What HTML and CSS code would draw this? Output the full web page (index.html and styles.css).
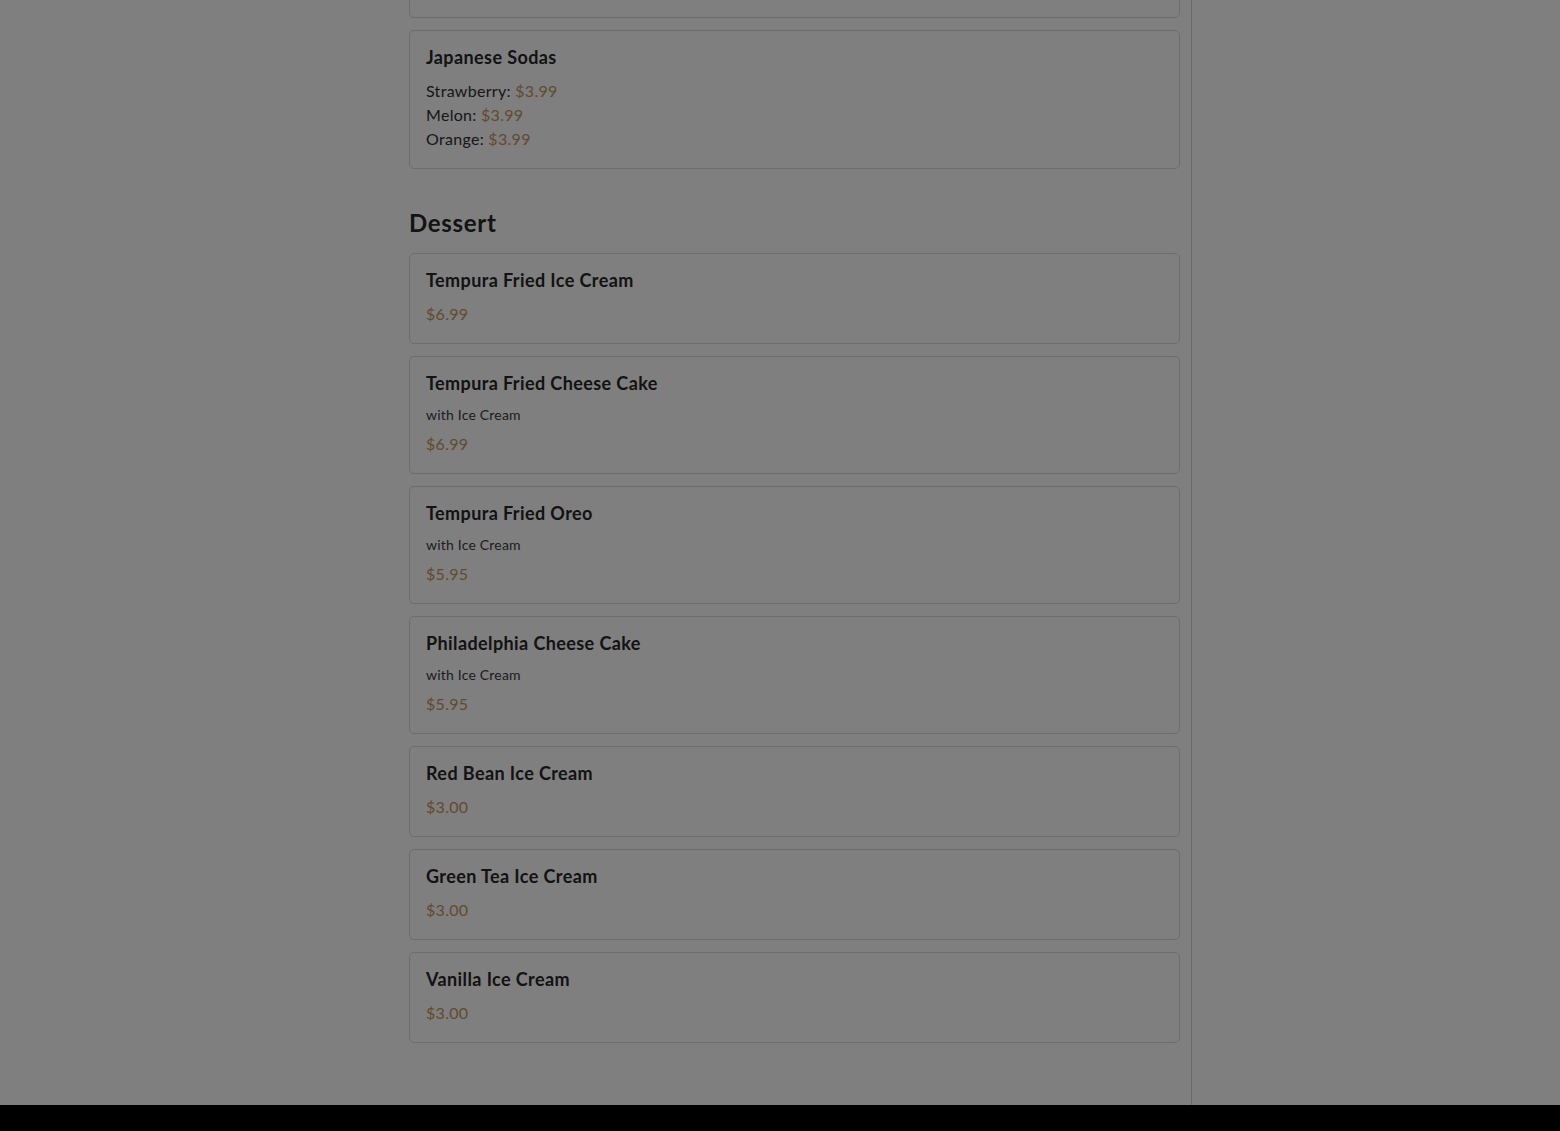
FILE: index.html
```html
<!DOCTYPE html>
<html lang="en">
<head>
<meta charset="utf-8">
<title>Menu</title>
<link rel="stylesheet" href="styles.css">
</head>
<body>
<div class="viewport">
  <main class="main">
    <div class="card card-first">
      <h3 class="item-title">Bubble Tea</h3>
      <div class="line">Taro: <span class="price">$4.99</span></div>
      <div class="line">Mango: <span class="price">$4.99</span></div>
      <div class="line">Brown Sugar: <span class="price">$4.99</span></div>
    </div>
    <div class="card">
      <h3 class="item-title">Japanese Sodas</h3>
      <div class="line">Strawberry: <span class="price">$3.99</span></div>
      <div class="line">Melon: <span class="price">$3.99</span></div>
      <div class="line">Orange: <span class="price">$3.99</span></div>
    </div>

    <section class="section">
      <h2 class="section-title">Dessert</h2>
      <div class="card">
        <h3 class="item-title">Tempura Fried Ice Cream</h3>
        <div class="price line">$6.99</div>
      </div>
      <div class="card">
        <h3 class="item-title">Tempura Fried Cheese Cake</h3>
        <p class="desc">with Ice Cream</p>
        <div class="price line">$6.99</div>
      </div>
      <div class="card">
        <h3 class="item-title">Tempura Fried Oreo</h3>
        <p class="desc">with Ice Cream</p>
        <div class="price line">$5.95</div>
      </div>
      <div class="card">
        <h3 class="item-title">Philadelphia Cheese Cake</h3>
        <p class="desc">with Ice Cream</p>
        <div class="price line">$5.95</div>
      </div>
      <div class="card">
        <h3 class="item-title">Red Bean Ice Cream</h3>
        <div class="price line">$3.00</div>
      </div>
      <div class="card">
        <h3 class="item-title">Green Tea Ice Cream</h3>
        <div class="price line">$3.00</div>
      </div>
      <div class="card">
        <h3 class="item-title">Vanilla Ice Cream</h3>
        <div class="price line">$3.00</div>
      </div>
    </section>
  </main>
  <footer class="footer"></footer>
</div>
<div class="overlay"></div>
</body>
</html>
```

FILE: styles.css
```css
* { box-sizing: border-box; }
html, body { margin: 0; padding: 0; }
body {
  background: #ffffff;
  font-family: "Lato", "Noto Sans", "Liberation Sans", sans-serif;
  color: #2a2a2a;
}
.viewport {
  height: 1131px;
  overflow: hidden;
}
.main {
  margin-left: 409px;
  width: 783px;
  padding-right: 11px;
  padding-bottom: 50px;
  border-right: 1px solid #d2d2d2;
  margin-top: -121px;
}
.card {
  border: 1px solid #d8d8d8;
  border-radius: 5px;
  padding: 16px 16px 17px;
  margin-bottom: 12px;
  background: #fff;
}
.item-title {
  margin: 0 0 12px;
  font-size: 18px;
  line-height: 20px;
  font-weight: 700;
  letter-spacing: 0.4px;
  color: #262626;
}
.line {
  font-size: 16px;
  line-height: 24px;
  letter-spacing: 0.3px;
  color: #2e2e2e;
}
.price { color: #c4955a; }
.desc {
  margin: 0 0 7px;
  font-size: 14px;
  line-height: 20px;
  letter-spacing: 0.2px;
  color: #3a3a3a;
}
.section { margin-top: 39px; }
.section-title {
  margin: 0 0 15px;
  font-size: 24px;
  line-height: 30px;
  font-weight: 700;
  letter-spacing: 0.7px;
  color: #262626;
}
.footer {
  height: 200px;
  background: #000;
}
.overlay {
  position: fixed;
  inset: 0;
  background: rgba(0, 0, 0, 0.5);
}
```
